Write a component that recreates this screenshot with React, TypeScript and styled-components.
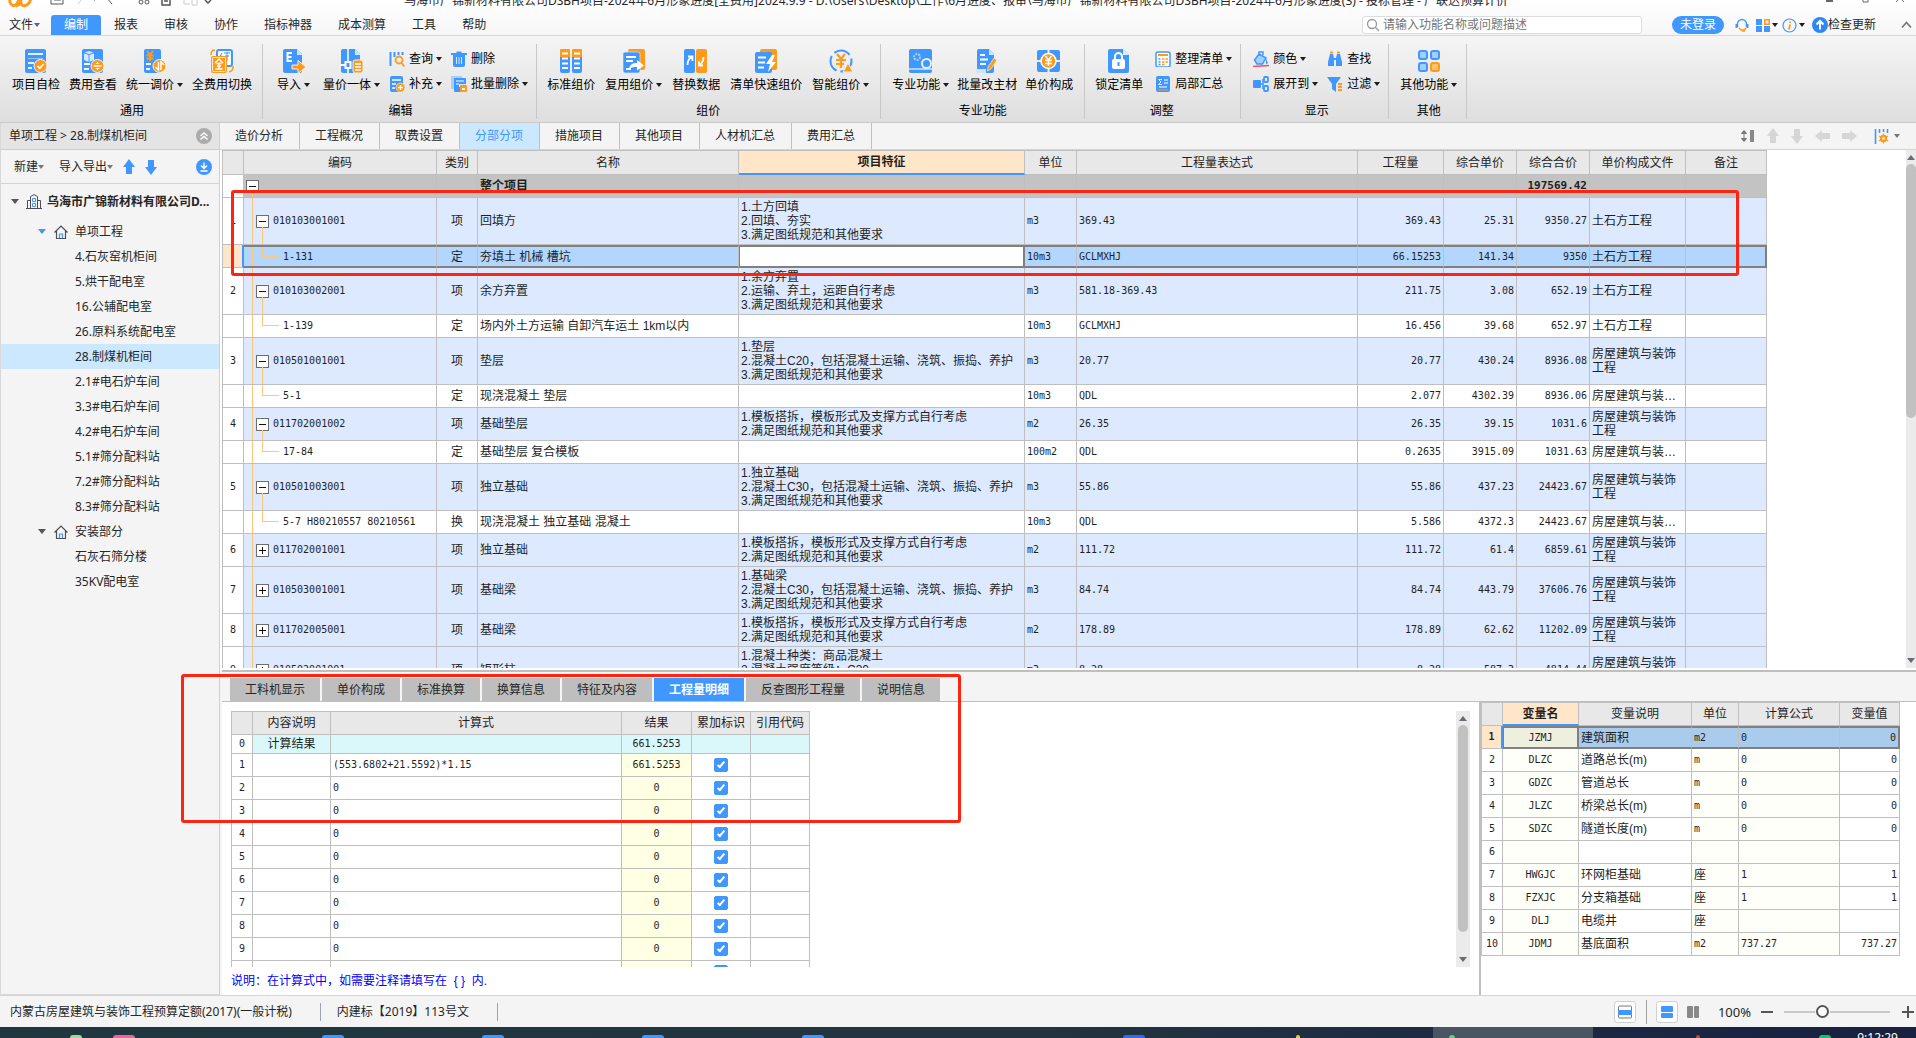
import React from 'react';
import styled, { createGlobalStyle, css } from 'styled-components';

const blue = '#4098ff';
const orange = '#ff9a1a';
const line = '#bfbfbf';
const uiFont = '"Noto Sans", "Noto Sans CJK SC", sans-serif';
const gridFont = '"Liberation Sans", "Noto Sans CJK SC", sans-serif';
const monoFont = '"DejaVu Sans Mono", "Noto Sans CJK SC", monospace';

const Global = createGlobalStyle`
  *, *::before, *::after { box-sizing: border-box; }
  body { margin: 0; overflow: hidden; }
  button, input { font: inherit; color: inherit; }
  button { background: none; border: 0; padding: 0; cursor: pointer; }
  svg { display: block; flex: none; }
`;

const Shell = styled.div`
  height: 100vh;
  display: flex;
  flex-direction: column;
  font: 12px/16px ${uiFont};
  color: #262626;
  background: #f4f4f4;
`;

/* ---------- title and menu ---------- */

const TopBar = styled.header`
  flex: none;
  background: linear-gradient(#ffffff, #f6f6f6);
  border-bottom: 1px solid #d8d8d8;
`;

const TitleRow = styled.div`
  height: 15px;
  overflow: hidden;
  display: grid;
  grid-template-columns: 1fr auto 1fr;
  align-items: start;
  padding: 0 12px 0 8px;
  svg:last-child { justify-self: end; }
`;

const TitleText = styled.h1`
  margin: -7px 0 0;
  font: 12px/16px ${uiFont};
  white-space: nowrap;
`;

const MenuRow = styled.nav`
  height: 20px;
  display: flex;
  align-items: stretch;
`;

const MenuItem = styled.button<{ $active?: boolean; $file?: boolean }>`
  display: flex;
  align-items: center;
  gap: 1px;
  padding: ${p => (p.$file ? '0 11px 0 9px' : '0 13px')};
  border-radius: 3px 3px 0 0;
  ${p => p.$active && css`background: ${blue}; color: #fff;`}
`;

const MenuTools = styled.div`
  margin-left: auto;
  padding-right: 4px;
  display: flex;
  align-items: center;
`;

const SearchBox = styled.label`
  width: 280px;
  height: 18px;
  margin-right: 30px;
  padding: 0 3px;
  display: flex;
  align-items: center;
  gap: 3px;
  background: #fff;
  border: 1px solid #dcdcdc;
  border-radius: 3px;
  input { flex: 1; min-width: 0; border: 0; outline: 0; padding: 0; background: none; height: 16px; }
  input::placeholder { color: #757575; opacity: 1; }
`;

const LoginPill = styled.button`
  width: 52px;
  height: 18px;
  border-radius: 9px;
  background: ${blue};
  color: #fff;
  line-height: 16px;
`;

const ToolButton = styled.button<{ $gap: number }>`
  margin-left: ${p => p.$gap}px;
  display: flex;
  align-items: center;
  gap: 2px;
`;

const UpdateButton = styled(ToolButton)`
  gap: 0;
`;

const Caret = styled.i<{ $color?: string; $size?: number }>`
  flex: none;
  width: 0;
  height: 0;
  border: ${p => p.$size ?? 3}px solid transparent;
  border-bottom: 0;
  border-top: ${p => (p.$size ?? 3) + 1}px solid ${p => p.$color ?? '#1c1c1c'};
`;

/* ---------- ribbon ---------- */

const Ribbon = styled.div`
  flex: none;
  height: 87px;
  display: flex;
  padding: 8px 0 3px;
  background: linear-gradient(#f5f5f5, #dedede);
  border-bottom: 1px solid #c9c9c9;
  color: #000;
`;

const Group = styled.section<{ $l: number; $r: number }>`
  display: flex;
  flex-direction: column;
  padding: 0 ${p => p.$r}px 0 ${p => p.$l}px;
  border-right: 1px solid #c8c8c8;
  h2 { margin: 0; font: 12px/16px ${uiFont}; text-align: center; }
`;

const GroupBody = styled.div<{ $gap: number }>`
  height: 59px;
  padding-top: 5px;
  display: flex;
  gap: ${p => p.$gap}px;
`;

const BigButton = styled.button`
  display: flex;
  flex-direction: column;
  align-items: center;
  gap: 4px;
  padding: 0 4px;
  height: 44px;
  white-space: nowrap;
  span { display: flex; align-items: center; gap: 3px; height: 16px; }
`;

const SmallGrid = styled.div`
  display: grid;
  grid-auto-flow: column;
  grid-template-rows: 20px 20px;
  row-gap: 5px;
  column-gap: 9px;
`;

const SmallButton = styled.button`
  display: flex;
  align-items: center;
  gap: 4px;
  white-space: nowrap;
  span { display: flex; align-items: center; gap: 3px; }
`;

/* ---------- work area ---------- */

const Work = styled.div`
  flex: 1;
  min-height: 0;
  display: grid;
  grid-template-columns: 220px minmax(0, 1fr);
`;

const Side = styled.aside`
  border-right: 1px solid #d0d0d0;
  border-bottom: 1px solid #d8d8d8;
  border-left: 1px solid #d8d8d8;
`;

const Crumb = styled.div`
  height: 27px;
  padding: 0 7px 0 8px;
  display: flex;
  align-items: center;
  justify-content: space-between;
  background: #e4e4e4;
  border-bottom: 1px solid #cfcfcf;
`;

const SideTools = styled.div`
  height: 34px;
  padding: 0 7px 0 13px;
  display: flex;
  align-items: center;
  border-bottom: 1px solid #d4d4d4;
  button { display: flex; align-items: center; margin-right: 10px; }
  button:nth-child(2) { margin-left: 5px; }
  button:last-child { margin: 0 0 0 auto; }
`;

const Tree = styled.ul`
  list-style: none;
  margin: 0;
  padding: 0;
`;

const TreeRow = styled.button<{ $level: number; $active?: boolean }>`
  width: 100%;
  height: ${p => (p.$level === 0 ? 35 : 25)}px;
  display: flex;
  align-items: center;
  padding-left: ${p => [10, 37, 74][p.$level]}px;
  font-weight: ${p => (p.$level === 0 ? 700 : 400)};
  background: ${p => (p.$active ? '#cce8ff' : 'transparent')};
  white-space: nowrap;
  svg { margin: ${p => (p.$level === 0 ? '0 5px 0 7px' : '0 7px 0 8px')}; }
`;

const Main = styled.main`
  display: flex;
  flex-direction: column;
  min-width: 0;
  min-height: 0;
`;

const MainTabs = styled.div`
  flex: none;
  height: 27px;
  display: flex;
  border-bottom: 1px solid #d4d4d4;
`;

const MainTab = styled.button<{ $active?: boolean }>`
  padding: 0 16px 0 15px;
  border-right: 1px solid ${line};
  ${p => p.$active && css`background: #cce8ff; color: ${blue};`}
`;

const TabTools = styled.div`
  margin-left: auto;
  padding-right: 16px;
  display: flex;
  align-items: center;
  gap: 12px;
  button { display: flex; align-items: center; gap: 4px; }
  button:last-child { margin-left: 5px; }
`;

const Panes = styled.div`
  flex: 1;
  min-height: 0;
  display: grid;
  grid-template-rows: minmax(0, 520fr) minmax(0, 325fr);
`;

const UpperPane = styled.section`
  position: relative;
  min-height: 0;
  padding: 0 0 2px 2px;
  display: flex;
  justify-content: space-between;
  background: #fff;
`;

const Clip = styled.div`
  flex: 1;
  min-width: 0;
  min-height: 0;
  overflow: hidden;
`;

const Mark = styled.div<{ $x: number; $y: number; $w: number; $h: number }>`
  position: absolute;
  left: ${p => p.$x}px;
  top: ${p => p.$y}px;
  width: ${p => p.$w}px;
  height: ${p => p.$h}px;
  border: 3px solid #fe2412;
  border-radius: 3px;
  pointer-events: none;
  z-index: 3;
`;

const Bar = styled.div<{ $w: number; $thumb: number }>`
  flex: none;
  width: ${p => p.$w}px;
  padding: 5px 0;
  display: flex;
  flex-direction: column;
  align-items: center;
  background: #ebebeb;
  &::before, &::after { content: ''; border: 4px solid transparent; }
  &::before { border-top: 0; border-bottom: 5px solid #6b6b75; margin-bottom: 4px; }
  &::after { border-bottom: 0; border-top: 5px solid #6b6b75; margin-top: auto; }
  div { width: 10px; height: ${p => p.$thumb}%; border-radius: 5px; background: #c1c1c1; }
`;

/* ---------- grids ---------- */

const Grid = styled.table`
  table-layout: fixed;
  border-collapse: separate;
  border-spacing: 0;
  border-top: 1px solid ${line};
  font: 12px/14px ${gridFont};
  color: #1f1f1f;
`;

const Head = styled.th<{ $on?: boolean; $h: number }>`
  height: ${p => p.$h}px;
  padding: 0;
  font-weight: ${p => (p.$on ? 700 : 400)};
  background: ${p => (p.$on ? '#ffe6c8' : '#e8e8e8')};
  border-right: 1px solid ${line};
  border-bottom: ${p => (p.$on ? `2px solid ${blue}` : `1px solid ${line}`)};
  &:first-child { border-left: 1px solid ${line}; }
`;

type CellProps = { $bg?: string; $align?: string; $mono?: boolean; $clip?: boolean; $picked?: boolean; $bold?: boolean; $focus?: boolean };

const Cell = styled.td<CellProps>`
  padding: 0 2px;
  overflow: hidden;
  background: ${p => p.$bg ?? '#fff'};
  text-align: ${p => p.$align ?? 'left'};
  border-right: 1px solid ${line};
  border-bottom: 1px solid ${line};
  font-weight: ${p => (p.$bold ? 700 : 400)};
  ${p => p.$mono && css`font-family: ${monoFont}; font-size: ${p.$bold ? 11 : 10}px;`}
  ${p => p.$clip && css`white-space: nowrap; text-overflow: ellipsis;`}
  ${p => p.$picked && css`
    border-top: 2px solid #808080;
    border-bottom: 2px solid #808080;
    &:last-child { border-right: 2px solid #808080; }
  `}
  ${p => p.$focus && css`border-right: 2px solid #808080; border-left: 1px solid #808080;`}
`;

const NumCell = styled.td<{ $on?: boolean; $bold?: boolean }>`
  padding: 0;
  text-align: center;
  font: ${p => (p.$bold ? 700 : 400)} 10px/14px ${monoFont};
  background: ${p => (p.$on ? '#ffe6c8' : '#fff')};
  border-left: 1px solid ${line};
  border-bottom: 1px solid ${line};
  border-right: ${p => (p.$on ? `2px solid ${blue}` : `1px solid ${line}`)};
`;

const Row = styled.tr<{ $h: number }>`
  height: ${p => p.$h}px;
`;

const CodeCell = styled(Cell)<{ $kind: 'root' | 'open' | 'closed' | 'leaf' }>`
  position: relative;
  padding-left: ${p => ({ root: 2, open: 12, closed: 12, leaf: 39 })[p.$kind]}px;
  &::before {
    content: '';
    position: absolute;
    left: 8px;
    top: ${p => (p.$kind === 'root' ? '16px' : '0')};
    bottom: -1px;
    width: 4px;
    border-left: 1px solid #ffc57a;
  }
  ${p => p.$kind === 'open' && css`
    &::after {
      content: ''; position: absolute; left: 18px; top: calc(50% + 6px); bottom: -1px;
      border-left: 1px solid #ffc57a;
    }
  `}
  ${p => p.$kind === 'leaf' && css`
    &::after {
      content: ''; position: absolute; left: 18px; top: 0; height: 50%; width: 17px;
      border-left: 1px solid #ffc57a; border-bottom: 1px solid #ffc57a;
    }
  `}
`;

const CodeLine = styled.div`
  display: flex;
  align-items: center;
  gap: 4px;
`;

const Toggle = styled.button`
  position: relative;
  flex: none;
  width: 13px;
  height: 13px;
  border: 1px solid #6e6e6e;
  background: #fff;
  display: grid;
  place-items: center;
`;

const PickedInput = styled.input`
  display: block;
  width: 100%;
  height: 19px;
  border: 0;
  outline: 0;
  background: transparent;
`;

const Check = styled.input`
  appearance: none;
  display: block;
  position: relative;
  width: 14px;
  height: 14px;
  margin: 0 auto;
  border-radius: 2px;
  border: 1px solid #a0a0a0;
  &:checked { background: ${blue}; border-color: ${blue}; }
  &:checked::after {
    content: ''; position: absolute; left: 4px; top: 1px; width: 4px; height: 8px;
    border: solid #fff; border-width: 0 2px 2px 0; transform: rotate(40deg);
  }
`;

/* ---------- lower pane ---------- */

const LowerPane = styled.section`
  position: relative;
  min-height: 0;
  display: flex;
  flex-direction: column;
  margin-left: 2px;
  border-top: 2px solid ${line};
`;

const LowerTabs = styled.div`
  flex: none;
  height: 30px;
  padding: 6px 0 0 8px;
  display: flex;
  gap: 2px;
  border-bottom: 1px solid ${line};
`;

const LowerTab = styled.button<{ $active?: boolean }>`
  padding: 0 15px;
  background: ${p => (p.$active ? blue : '#bebebe')};
  color: ${p => (p.$active ? '#fff' : '#262626')};
  font-weight: ${p => (p.$active ? 700 : 400)};
`;

const LowerBody = styled.div`
  flex: 1;
  min-height: 0;
  display: grid;
  grid-template-columns: minmax(0, 1fr) 437px;
  background: #fff;
`;

const Formula = styled.div`
  min-height: 0;
  display: flex;
  flex-direction: column;
  padding: 9px 9px 0;
  p { margin: 0; font: 12px/28px ${gridFont}; color: #0000ff; white-space: pre; }
`;

const FormulaArea = styled.div`
  flex: 1;
  min-height: 0;
  display: flex;
`;

const Variables = styled.div`
  border-left: 2px solid ${line};
  overflow: hidden;
`;

/* ---------- status and task bars ---------- */

const Status = styled.footer`
  flex: none;
  height: 32px;
  display: flex;
  align-items: center;
  border-top: 1px solid #d4d4d4;
  background: #f4f4f4;
  span { padding: 0 28px 0 16px; border-right: 1px solid #9aa4b4; line-height: 18px; }
  span:first-child { padding-left: 10px; }
`;

const StatusTools = styled.div`
  margin-left: auto;
  padding-right: 2px;
  display: flex;
  align-items: center;
  button { display: grid; place-items: center; }
  output { font-size: 13px; margin: 0 10px 0 14px; }
`;

const ViewButton = styled.button<{ $framed?: boolean }>`
  width: 22px;
  height: 22px;
  border-radius: 3px;
  ${p => (p.$framed ? css`background: #fff; border: 1px solid #d0d0d0;` : css`margin-left: 4px;`)}
`;

const Split = styled.i`
  width: 1px;
  height: 24px;
  margin: 0 9px 0 10px;
  background: #a0a0a0;
`;

const Zoom = styled.input`
  appearance: none;
  width: 106px;
  height: 14px;
  margin: 0 12px 0 11px;
  background: linear-gradient(#c8c8c8, #c8c8c8) center / 100% 2px no-repeat;
  &::-webkit-slider-thumb {
    appearance: none; width: 13px; height: 13px; border-radius: 50%;
    background: #fff; border: 2px solid #555; box-shadow: 0 0 0 1px #f4f4f4;
  }
`;

const Task = styled.div`
  flex: none;
  height: 11px;
  overflow: hidden;
  display: flex;
  align-items: flex-end;
  background: linear-gradient(90deg, #20373f, #22343f 55%, #1d2944 80%, #18213d);
  color: #fff;
  time { margin: 5px 18px 0 auto; align-self: flex-start; line-height: 12px; }
`;

const TaskIcon = styled.i<{ $gap: number; $w: number; $c: string }>`
  flex: none;
  margin-left: ${p => p.$gap}px;
  width: ${p => p.$w}px;
  height: 3px;
  border-radius: 3px 3px 0 0;
  background: ${p => p.$c};
`;

const TaskActive = styled.div`
  flex: none;
  margin-left: 133px;
  width: 160px;
  height: 11px;
  display: flex;
  align-items: flex-end;
  background: #4a5563;
`;

/* ---------- icons ---------- */

const Svg = ({ w = 24, h = 24, box, children }: { w?: number; h?: number; box?: string; children: React.ReactNode }) => (
  <svg width={w} height={h} viewBox={box ?? `0 0 ${w} ${h}`} fill="none" aria-hidden="true">{children}</svg>
);

const Doc = ({ lines = true }: { lines?: boolean }) => (
  <>
    <rect x="1" y="0" width="21" height="24" rx="2" fill={blue} />
    {lines && <path d="M4 5h15M4 14h6M4 19h4" stroke="#e4f1ff" strokeWidth="2" />}
  </>
);
const Ring = ({ children }: { children?: React.ReactNode }) => (
  <><circle cx="16.500" cy="17" r="6.500" fill={orange} stroke="#f4f4f4" />{children}</>
);

const big: Record<string, React.ReactNode> = {
  check: <><Doc /><path d="M4 9.500h15" stroke="#8cc2ff" /><Ring><path d="m13.500 17 2.200 2.300 4-4.300" stroke="#fff" strokeWidth="1.800" /></Ring></>,
  cost: <><Doc lines={false} /><path d="M3 4l5-2 5 2v7l-5 2-5-2z" fill="#d7eaff" /><path d="M3 4l5 1.500L13 4M8 5.500V13" stroke={blue} /><path d="M3 15h6M3 20h5" stroke="#fff" strokeWidth="2" /><Ring><path d="M12.500 17h8" stroke="#fff" strokeWidth="1.500" /><path d="m14.500 15 2-2 2 2zm0 4 2 2 2-2z" fill="#fff" /></Ring></>,
  adjust: <><rect x="1" width="17" height="24" rx="2" fill={blue} /><path d="m4 2 3 4 3-4M3.500 6.500h7M3.500 9.500h7M7 6v6" stroke={orange} strokeWidth="2" /><path d="M3 15h5M3 20h4" stroke="#fff" strokeWidth="2" /><Ring><path d="M15.500 13v8l-3-3M18 21v-8l3 3" stroke="#fff" strokeWidth="1.500" /></Ring></>,
  swap: <><rect x="7" y="1" width="15" height="16" rx="2" fill="#fff" stroke={blue} strokeWidth="2" /><path d="m12 4-2 3h2m2-3h6m-5 3h4m-2-4v9" stroke={blue} /><path d="M1 6c0-4 2-5 4-5M23 17c0 4-1 5-4 6" stroke={orange} strokeWidth="1.500" /><rect x="1" y="7" width="16" height="17" rx="2" fill={orange} /><rect x="2.500" y="8.500" width="13" height="14" rx="1" stroke="#fff" strokeWidth=".8" /><path d="m5 14 4-4 4 4M6.500 14.500h5M7 17h4M5.500 20h7M9 14v6" stroke="#fff" strokeWidth="1.300" /></>,
  import: <><path d="M3 0h12l5 5v17a2 2 0 0 1-2 2H3a2 2 0 0 1-2-2V2a2 2 0 0 1 2-2z" fill={blue} /><path d="M15 0l6 6h-6z" fill="#cfe5ff" /><path d="M10 4H5.500v8H10M5.500 8H9.500" stroke="#fff" strokeWidth="2" /><path d="M10 16h6v-4.500l8 6.500-8 6.500V20h-6z" fill={orange} stroke="#eee" /></>,
  zip: <><path d="M3 0h12l5 5v17a2 2 0 0 1-2 2H3a2 2 0 0 1-2-2V2a2 2 0 0 1 2-2z" fill={blue} /><path d="M15 0l6 6h-6z" fill="#cfe5ff" /><path d="M8 0v13M8 19v5" stroke="#fff" strokeWidth="1.500" /><path d="M5.500 13h5v6h-5zM0 16h5" stroke="#fff" strokeWidth="2" /><rect x="13" y="11" width="10" height="13" rx="2" fill={orange} stroke="#eee" /><path d="M15 15h6M15 18h6M15 21h6" stroke="#fff" strokeWidth="1.300" /></>,
  standard: <>{[1, 13].map(x => <g key={x}><rect x={x} width="10" height="24" rx="2" fill={blue} /><path d={`M${x} 8V2a2 2 0 0 1 2-2h6a2 2 0 0 1 2 2v6z`} fill={orange} /><path d={`M${x + 2} 4.500h6M${x + 2} 9.500h6M${x + 2} 14.500h6M${x + 2} 19h6`} stroke="#fff" strokeWidth="2" /></g>)}</>,
  reuse: <><rect x="6" y="0" width="17" height="21" rx="2" fill={orange} /><rect x="1" y="3" width="17" height="21" rx="2" fill={blue} stroke="#eee" strokeWidth=".6" /><path d="M4 8h10M4 12h7M4 20h5" stroke="#fff" strokeWidth="1.800" /><path d="M7 20c1-5 4-6 8-6v-3l7 5.500-7 5V18c-3 0-5 0-8 2z" fill="#fff" /></>,
  replace: <><rect x="0" width="11" height="24" rx="2" fill={blue} /><rect x="12" width="11" height="24" rx="2" fill={orange} /><path d="M3.500 16c0-4 1-6 4-8M4 7.500h4.500V12M19.500 8c0 4-1 6-4 8M19 16.500h-4V12" stroke="#fff" strokeWidth="1.800" /></>,
  quick: <><rect x="6" y="0" width="17" height="21" rx="2" fill={orange} /><rect x="1" y="3" width="17" height="21" rx="2" fill={blue} /><path d="M4 8.500h8M4 13.500h7M4 18.500h6" stroke="#fff" strokeWidth="2" /><path d="m18 6-6 9h4l-2 8 8-10h-4l3-7z" fill="#fff" /></>,
  smart: <><circle cx="12" cy="12" r="10.500" stroke={blue} strokeWidth="2" strokeDasharray="17 4" /><path d="m8 5 4 5 4-5M7 11h10M7 15h8M12 10v9" stroke={orange} strokeWidth="2.200" /><path d="m19 14 5 9H14z" fill={orange} stroke="#eee" /></>,
  pro: <><rect x="0" width="23" height="24" rx="2" fill={blue} /><path d="M0 20h23" stroke="#cfe5ff" strokeWidth="1.500" /><circle cx="8" cy="8" r="3" stroke="#a6d0ff" strokeWidth="2" strokeDasharray="2 1" /><circle cx="17.500" cy="14.500" r="4.500" fill={blue} stroke="#e4f1ff" strokeWidth="2" /></>,
  batch: <><path d="M4 0h10l5 5v17a2 2 0 0 1-2 2H2V2a2 2 0 0 1 2-2z" fill={blue} /><path d="M14 0l6 6h-6z" fill="#cfe5ff" /><path d="M1 20h10v4H3a2 2 0 0 1-2-2z" fill="#cfe5ff" /><path d="M5 6h5M5 10.500h8M5 15h6" stroke="#fff" strokeWidth="1.800" /><path d="m13 18 6-9 3 2-6 9-3.500 2z" fill={orange} stroke="#eee" strokeWidth=".7" /></>,
  compose: <><rect x="0" y="1" width="23" height="22" rx="2" fill={blue} /><path d="M11.500 0v24M0 12h23" stroke="#ececec" strokeWidth="2" /><circle cx="11.500" cy="12" r="7.500" fill={orange} stroke="#fff" strokeWidth="1.500" /><path d="m8.500 7 3 4 3-4M8 11.500h7M8 14.500h7M11.500 11v6" stroke="#fff" strokeWidth="1.500" /></>,
  lock: <><path d="M3 0h13l6 6v16a2 2 0 0 1-2 2H3a2 2 0 0 1-2-2V2a2 2 0 0 1 2-2z" fill={blue} /><path d="M16 0l6 6h-6z" fill="#dcedff" /><rect x="5" y="10" width="13" height="10" rx="2" fill="#fff" /><path d="M8 10V7.500a3.500 3.500 0 0 1 7 0V10" stroke="#fff" strokeWidth="2" /><path d="M11.500 13v4" stroke={blue} strokeWidth="2" /></>,
  other: <>{[[2, 2, blue, '#a3cfff'], [14, 2, blue, '#a3cfff'], [2, 14, blue, '#a3cfff'], [14, 14, orange, '#ffc46b']].map(([x, y, s, f]) => <rect key={`${x}${y}`} x={x} y={y} width="8" height="8" rx="2" fill={f as string} stroke={s as string} strokeWidth="2" />)}</>,
};

const small: Record<string, React.ReactNode> = {
  query: <><path d="M1.500 1v14M5.500 1v5M9.500 1v3M13.500 1v3" stroke={blue} strokeWidth="2" /><circle cx="10" cy="9" r="3.500" stroke={orange} strokeWidth="1.800" /><path d="m12.500 12 3 3.500" stroke={orange} strokeWidth="1.800" /></>,
  add: <><rect x="1" y="0" width="13" height="16" rx="2" fill={blue} /><path d="M3 4h9M3 8h4M3 12h3" stroke="#fff" strokeWidth="1.500" /><circle cx="11.500" cy="11.500" r="4.500" fill={orange} stroke="#eee" strokeWidth=".6" /><path d="M9 11.500h5M11.500 9v5" stroke="#fff" strokeWidth="1.300" /></>,
  trash: <><path d="M0 3h16M5.500 1.500h5" stroke={blue} strokeWidth="2" /><path d="M2 4h12v10a2 2 0 0 1-2 2H4a2 2 0 0 1-2-2z" fill={blue} /><path d="M5.500 6v7M8 6v7M10.500 6v7" stroke="#cfe5ff" /></>,
  batchDel: <><rect x="0" y="0" width="11" height="13" rx="1" fill="#a3cfff" /><rect x="3" y="2" width="12" height="14" rx="1" fill={blue} /><path d="M5 5h8M5 8h3" stroke="#fff" /><path d="M8 9.500h8" stroke="#fff" strokeWidth="2.500" /><rect x="9" y="9" width="7" height="7" rx="1" fill={orange} /><path d="M11 12h3v2h-3z" fill="#fff" /></>,
  arrange: <><rect x="1" y="1" width="14" height="15" rx="2" fill="#fff" stroke={blue} strokeWidth="1.500" /><path d="M3 4h10" stroke={orange} strokeWidth="2" /><path d="M3.500 8h2M3.500 11h2M3.500 13.500h2" stroke={blue} strokeWidth="1.500" /><path d="M7 8h2.500M10.500 8H13M7 11h2.500M10.500 11H13M7 13.500h2.500" stroke={orange} strokeWidth="1.500" /></>,
  partial: <><rect x="1" y="0" width="14" height="16" rx="2" fill={blue} /><path d="M7 3.500H3.500L6 6 3.500 8.500H7" stroke="#d7eaff" /><path d="M9 4h4M9 7h4M4 11h8" stroke="#fff" strokeWidth="1.200" /><path d="M3 14h10" stroke={orange} /></>,
  color: <><path d="m6 3 7 4-3.500 6H4L1.500 9z" fill="#a3cfff" stroke={blue} strokeWidth="1.500" /><path d="M6 5V1h4v3" stroke={blue} strokeWidth="1.500" /><path d="M13 8c2 3 2.500 5 0 5z" fill={blue} /><path d="M0 15.500l16-1" stroke="#ff4d4f" strokeWidth="1.500" /></>,
  expand: <><rect x="0" y="4" width="8" height="8" rx="1" fill={blue} /><path d="M8 8h2M10 3v10" stroke={blue} strokeWidth="1.500" /><rect x="11" y="1" width="4" height="5" rx="1" stroke={blue} strokeWidth="1.800" /><rect x="11" y="10" width="4" height="5" rx="1" stroke={blue} strokeWidth="1.800" /></>,
  find: <><path d="M3 3h3l1 4v8H1V11zM13 3h-3L9 7v8h6V11z" fill={blue} /><path d="M3 1.500h3M10 1.500h3" stroke={orange} strokeWidth="2" /><path d="M7 8h2" stroke={blue} strokeWidth="2" /></>,
  filter: <><path d="M0 1h14L9 8v8l-4-3V8z" fill={blue} /><path d="M11 8h4M11 11h4M11 14h4" stroke={orange} strokeWidth="1.800" /></>,
};

const House = () => (
  <Svg w={14} h={14}><path d="M.5 7.500 7 1l6.500 6.500M2.500 6v7.500h9V6" stroke="#4a4f58" strokeWidth="1.200" /><path d="M5.500 13V9h3v4" stroke={blue} strokeWidth="1.200" /></Svg>
);

const Arrow = ({ turn, color }: { turn: number; color: string }) => (
  <Svg w={12} h={16}><path transform={`rotate(${turn} 6 8)`} d="M6 0l6 8H9v7H3V8H0z" fill={color} /></Svg>
);

/* ---------- data ---------- */

type Btn = [string, string, boolean?];
type RibbonGroup = { title: string; l: number; r: number; gap: number; big: Btn[]; small?: Btn[] };

const ribbon: RibbonGroup[] = [
  { title: '通用', l: 8, r: 6, gap: 1, big: [['check', '项目自检'], ['cost', '费用查看'], ['adjust', '统一调价', true], ['swap', '全费用切换']] },
  { title: '编辑', l: 10, r: 8, gap: 5, big: [['import', '导入', true], ['zip', '量价一体', true]], small: [['query', '查询', true], ['add', '补充', true], ['trash', '删除'], ['batchDel', '批量删除', true]] },
  { title: '组价', l: 6, r: 7, gap: 2, big: [['standard', '标准组价'], ['reuse', '复用组价', true], ['replace', '替换数据'], ['quick', '清单快速组价'], ['smart', '智能组价', true]] },
  { title: '专业功能', l: 7, r: 7, gap: 0, big: [['pro', '专业功能', true], ['batch', '批量改主材'], ['compose', '单价构成']] },
  { title: '调整', l: 6, r: 8, gap: 8, big: [['lock', '锁定清单']], small: [['arrange', '整理清单', true], ['partial', '局部汇总']] },
  { title: '显示', l: 12, r: 8, gap: 0, big: [], small: [['color', '颜色', true], ['expand', '展开到', true], ['find', '查找'], ['filter', '过滤', true]] },
  { title: '其他', l: 7, r: 5, gap: 0, big: [['other', '其他功能', true]] },
];

const house = '房屋建筑与装饰工程';
const earth = '土石方工程';
const rule = '满足图纸规范和其他要求';
const form = ['1.模板搭拆，模板形式及支撑方式自行考虑', `2.${rule}`];
const pour = (name: string, grade: string) => [`1.${name}`, `2.混凝土${grade}，包括混凝土运输、浇筑、振捣、养护`, `3.${rule}`];

type Item = { no?: string; kind: 'open' | 'closed' | 'leaf'; code: string; type: string; name: string; feat?: string[]; rest: string[]; picked?: boolean };

const items: Item[] = [
  { no: '1', kind: 'open', code: '010103001001', type: '项', name: '回填方', feat: ['1.土方回填', '2.回填、夯实', `3.${rule}`], rest: ['m3', '369.43', '369.43', '25.31', '9350.27', earth] },
  { kind: 'leaf', code: '1-131', type: '定', name: '夯填土 机械 槽坑', rest: ['10m3', 'GCLMXHJ', '66.15253', '141.34', '9350', earth], picked: true },
  { no: '2', kind: 'open', code: '010103002001', type: '项', name: '余方弃置', feat: ['1.余方弃置', '2.运输、弃土，运距自行考虑', `3.${rule}`], rest: ['m3', '581.18-369.43', '211.75', '3.08', '652.19', earth] },
  { kind: 'leaf', code: '1-139', type: '定', name: '场内外土方运输 自卸汽车运土 1km以内', rest: ['10m3', 'GCLMXHJ', '16.456', '39.68', '652.97', earth] },
  { no: '3', kind: 'open', code: '010501001001', type: '项', name: '垫层', feat: pour('垫层', 'C20'), rest: ['m3', '20.77', '20.77', '430.24', '8936.08', house] },
  { kind: 'leaf', code: '5-1', type: '定', name: '现浇混凝土 垫层', rest: ['10m3', 'QDL', '2.077', '4302.39', '8936.06', house] },
  { no: '4', kind: 'open', code: '011702001002', type: '项', name: '基础垫层', feat: form, rest: ['m2', '26.35', '26.35', '39.15', '1031.6', house] },
  { kind: 'leaf', code: '17-84', type: '定', name: '基础垫层 复合模板', rest: ['100m2', 'QDL', '0.2635', '3915.09', '1031.63', house] },
  { no: '5', kind: 'open', code: '010501003001', type: '项', name: '独立基础', feat: pour('独立基础', 'C30'), rest: ['m3', '55.86', '55.86', '437.23', '24423.67', house] },
  { kind: 'leaf', code: '5-7 H80210557 80210561', type: '换', name: '现浇混凝土 独立基础 混凝土', rest: ['10m3', 'QDL', '5.586', '4372.3', '24423.67', house] },
  { no: '6', kind: 'closed', code: '011702001001', type: '项', name: '独立基础', feat: form, rest: ['m2', '111.72', '111.72', '61.4', '6859.61', house] },
  { no: '7', kind: 'closed', code: '010503001001', type: '项', name: '基础梁', feat: pour('基础梁', 'C30'), rest: ['m3', '84.74', '84.74', '443.79', '37606.76', house] },
  { no: '8', kind: 'closed', code: '011702005001', type: '项', name: '基础梁', feat: form, rest: ['m2', '178.89', '178.89', '62.62', '11202.09', house] },
  { no: '9', kind: 'closed', code: '010502001001', type: '项', name: '矩形柱', feat: ['1.混凝土种类：商品混凝土', '2.混凝土强度等级：C30', `3.${rule}`], rest: ['m3', '8.28', '8.28', '587.3', '4814.44', house] },
];

const mainCols: [string, number][] = [['', 22], ['编码', 193], ['类别', 41], ['名称', 261], ['项目特征', 286], ['单位', 52], ['工程量表达式', 281], ['工程量', 86], ['综合单价', 73], ['综合合价', 73], ['单价构成文件', 96], ['备注', 81]];
const calcCols: [string, number][] = [['', 22], ['内容说明', 78], ['计算式', 291], ['结果', 70], ['累加标识', 59], ['引用代码', 59]];
const varCols: [string, number][] = [['', 22], ['变量名', 76], ['变量说明', 113], ['单位', 47], ['计算公式', 101], ['变量值', 60]];

const vars = [
  ['JZMJ', '建筑面积', 'm2', '0', '0'], ['DLZC', '道路总长(m)', 'm', '0', '0'], ['GDZC', '管道总长', 'm', '0', '0'],
  ['JLZC', '桥梁总长(m)', 'm', '0', '0'], ['SDZC', '隧道长度(m)', 'm', '0', '0'], ['', '', '', '', ''],
  ['HWGJC', '环网柜基础', '座', '1', '1'], ['FZXJC', '分支箱基础', '座', '1', '1'], ['DLJ', '电缆井', '座', '', ''],
  ['JDMJ', '基底面积', 'm2', '737.27', '737.27'],
];

const leaves = ['4.石灰窑机柜间', '5.烘干配电室', '16.公辅配电室', '26.原料系统配电室', '28.制煤机柜间', '2.1#电石炉车间', '3.3#电石炉车间', '4.2#电石炉车间', '5.1#筛分配料站', '7.2#筛分配料站', '8.3#筛分配料站'];

const isLatin = (s: string) => /^[\x20-\x7e]*$/.test(s);
const sum = (cols: [string, number][]) => cols.reduce((t, c) => t + c[1], 0);

/* ---------- parts ---------- */

const Cols = ({ cols, h, on }: { cols: [string, number][]; h: number; on?: string }) => (
  <>
    <colgroup>{cols.map(([n, w]) => <col key={n} style={{ width: w }} />)}</colgroup>
    <thead><tr>{cols.map(([n]) => <Head key={n} $h={h} $on={!!on && n === on}>{n}</Head>)}</tr></thead>
  </>
);

const Expander = ({ open }: { open: boolean }) => (
  <Toggle aria-label={open ? '折叠' : '展开'}>
    <Svg w={9} h={9}><path d={open ? 'M1 4.500h7' : 'M1 4.500h7M4.500 1v7'} stroke="#111" /></Svg>
  </Toggle>
);

const MainGrid = () => (
  <Grid style={{ width: sum(mainCols) }}>
    <Cols cols={mainCols} h={24} on="项目特征" />
    <tbody>
      <Row $h={23}>
        <NumCell />
        <CodeCell $kind="root" $bg="#c3c3c3"><Expander open /></CodeCell>
        <Cell $bg="#c3c3c3" />
        <Cell $bg="#c3c3c3" $bold>整个项目</Cell>
        {[0, 1, 2, 3, 4].map(i => <Cell key={i} $bg="#c3c3c3" />)}
        <Cell $bg="#c3c3c3" $bold $mono $align="right">197569.42</Cell>
        <Cell $bg="#c3c3c3" /><Cell $bg="#c3c3c3" />
      </Row>
      {items.map(it => {
        const bg = it.picked ? '#b3d6ff' : it.kind === 'leaf' ? '#fff' : '#dce9fe';
        const h = it.feat ? (it.feat.length === 3 ? 47 : 33) : 23;
        return (
          <Row key={it.code} $h={h}>
            <NumCell $on={it.picked}>{it.no}</NumCell>
            <CodeCell $kind={it.kind} $bg={bg} $mono $picked={it.picked} $clip>
              <CodeLine>{it.kind !== 'leaf' && <Expander open={it.kind === 'open'} />}{it.code}</CodeLine>
            </CodeCell>
            <Cell $bg={bg} $align="center" $picked={it.picked}>{it.type}</Cell>
            <Cell $bg={bg} $clip $picked={it.picked}>{it.name}</Cell>
            <Cell $bg={it.picked ? '#fff' : bg} $clip $picked={it.picked} $focus={it.picked}>
              {it.picked ? <PickedInput aria-label="项目特征" /> : it.feat?.map(f => <div key={f}>{f}</div>)}
            </Cell>
            {it.rest.map((v, i) => (
              <Cell key={i} $bg={bg} $picked={it.picked} $mono={isLatin(v)} $align={i > 1 && i < 5 ? 'right' : 'left'} $clip={i === 5 && it.kind === 'leaf'}>{v}</Cell>
            ))}
            <Cell $bg={bg} $picked={it.picked} />
          </Row>
        );
      })}
    </tbody>
  </Grid>
);

const CalcGrid = () => (
  <Grid style={{ width: sum(calcCols) }}>
    <Cols cols={calcCols} h={23} />
    <tbody>
      <Row $h={19}>
        <NumCell>0</NumCell>
        <Cell $bg="#daf8f9" $align="center">计算结果</Cell>
        <Cell $bg="#daf8f9" />
        <Cell $bg="#daf8f9" $mono $align="center">661.5253</Cell>
        <Cell $bg="#daf8f9" /><Cell $bg="#daf8f9" />
      </Row>
      {Array.from({ length: 10 }, (_, i) => i + 1).map(n => (
        <Row key={n} $h={23}>
          <NumCell>{n}</NumCell>
          <Cell />
          <Cell $mono>{n === 1 ? '(553.6802+21.5592)*1.15' : '0'}</Cell>
          <Cell $bg="#ffffe4" $mono $align="center">{n === 1 ? '661.5253' : '0'}</Cell>
          <Cell><Check type="checkbox" defaultChecked aria-label={`累加标识 ${n}`} /></Cell>
          <Cell />
        </Row>
      ))}
    </tbody>
  </Grid>
);

const VarGrid = () => (
  <Grid style={{ width: sum(varCols) }}>
    <Cols cols={varCols} h={23} on="变量名" />
    <tbody>
      {vars.map((v, r) => (
        <Row key={r} $h={23}>
          <NumCell $on={r === 0} $bold={r === 0}>{r + 1}</NumCell>
          {v.map((t, i) => (
            <Cell
              key={i}
              $picked={r === 0}
              $focus={r === 0 && i === 0}
              $mono={isLatin(t)}
              $align={i === 0 ? 'center' : i === 4 ? 'right' : 'left'}
              $bg={r === 0 ? (i === 0 ? '#efefdf' : '#aaccec') : i === 1 || i === 4 ? '#fff' : '#fffffa'}
            >{t}</Cell>
          ))}
        </Row>
      ))}
    </tbody>
  </Grid>
);

export default function App() {
  return (
    <Shell>
      <Global />
      <TopBar>
        <TitleRow>
          <Svg w={210} h={8}>
            <path d="M2 -4c-2 10 6 14 9 3M8 6c5-1 5-6 6-11M16 6c5-1 7-6 7-11M13 0c-1 5 2 7 6 5" stroke={orange} strokeWidth="3" />
            <path d="M43 -2v6h12v-6M46 0h7M104 4l-6-7M86 0h1" stroke="#555" />
            <path d="M70 4l6-7M176 -2v6h6M184 -2h5v7h-5z" stroke="#ccc" />
            <circle cx="133" cy="2" r="2" stroke="#555" /><circle cx="139" cy="2" r="2" stroke="#555" />
            <path d="M124 5V2h7V-3M127 2v3" stroke="#fff" strokeWidth="0" />
            <path d="M154 -3v8h8v-8M156 1h4M197 0l3 3 3-3" stroke="#555" strokeWidth="1.500" />
          </Svg>
          <TitleText>乌海市广锦新材料有限公司DSBH项目-2024年6月形象进度[全费用]2024.9.9 - D:\Users\Desktop\工作\6月进度、报审\乌海市广锦新材料有限公司DSBH项目-2024年6月形象进度(3) - 投标管理 - 广联达预算计价</TitleText>
          <Svg w={90} h={8}><path d="M12 1h7" stroke="#666" strokeWidth="2" /><path d="M49 -3v5h5v-5M82 2l8-8M90 2l-8-8" stroke="#666" /></Svg>
        </TitleRow>
        <MenuRow>
          <MenuItem $file>文件<Caret $color="#666" /></MenuItem>
          {['编制', '报表', '审核', '协作', '指标神器', '成本测算', '工具', '帮助'].map((m, i) => <MenuItem key={m} $active={i === 0}>{m}</MenuItem>)}
          <MenuTools>
            <SearchBox>
              <Svg w={14} h={14}><circle cx="6" cy="6" r="4.500" stroke="#999" strokeWidth="1.300" /><path d="m9.500 9.500 3.500 3.500" stroke="#999" strokeWidth="1.300" /></Svg>
              <input aria-label="搜索" placeholder="请输入功能名称或问题描述" />
            </SearchBox>
            <LoginPill>未登录</LoginPill>
            <ToolButton $gap={11} aria-label="客服"><Svg w={14} h={14}><path d="M2.500 9V6a4.500 4.500 0 0 1 9 0v3" stroke={blue} strokeWidth="1.500" /><path d="M1.500 6v4M12.500 6v4" stroke={blue} strokeWidth="2" /><path d="M4 10c2 3 5 3 7 0M7 13h3" stroke={orange} strokeWidth="1.500" /></Svg></ToolButton>
            <ToolButton $gap={7} aria-label="应用"><Svg w={14} h={14}><path d="M0 1h6v6H0zM0 8h6v6H0zM8 8h6v6H8z" fill={blue} /><path d="M8.800 1.800h4.400v4.400H8.800z" stroke={orange} strokeWidth="1.600" /></Svg><Caret /></ToolButton>
            <ToolButton $gap={4} aria-label="信息"><Svg w={15} h={15}><circle cx="7.500" cy="7.500" r="6.500" stroke={blue} strokeWidth="1.200" /><path d="M8 3.500v1.500M8 6.500 7 11.500" stroke={orange} strokeWidth="1.800" /></Svg><Caret /></ToolButton>
            <UpdateButton $gap={7}><Svg w={16} h={16}><circle cx="8" cy="8" r="8" fill="#2f87f5" /><path d="M8 12.500v-8M4.500 7.500 8 4l3.500 3.500" stroke="#fff" strokeWidth="2" /></Svg>检查更新</UpdateButton>
            <ToolButton $gap={25} aria-label="收起功能区"><Svg w={11} h={8}><path d="m1 6.500 4.500-5 4.500 5" stroke="#777" strokeWidth="1.800" /></Svg></ToolButton>
          </MenuTools>
        </MenuRow>
      </TopBar>

      <Ribbon>
        {ribbon.map(g => (
          <Group key={g.title} $l={g.l} $r={g.r}>
            <GroupBody $gap={g.gap}>
              {g.big.map(([icon, label, drop]) => (
                <BigButton key={icon}><Svg>{big[icon]}</Svg><span>{label}{drop && <Caret />}</span></BigButton>
              ))}
              {g.small && (
                <SmallGrid>
                  {g.small.map(([icon, label, drop]) => (
                    <SmallButton key={icon}><Svg w={16} h={16}>{small[icon]}</Svg><span>{label}{drop && <Caret />}</span></SmallButton>
                  ))}
                </SmallGrid>
              )}
            </GroupBody>
            <h2>{g.title}</h2>
          </Group>
        ))}
      </Ribbon>

      <Work>
        <Side>
          <Crumb>
            单项工程 &gt; 28.制煤机柜间
            <button aria-label="收起"><Svg w={16} h={16}><circle cx="8" cy="8" r="8" fill="#acacac" /><path d="m4.500 8 3.500-3 3.500 3M4.500 11.500 8 8.500l3.500 3" stroke="#fff" strokeWidth="1.400" /></Svg></button>
          </Crumb>
          <SideTools>
            <button>新建<Caret $color="#777" /></button>
            <button>导入导出<Caret $color="#777" /></button>
            <button aria-label="上移"><Arrow turn={0} color={blue} /></button>
            <button aria-label="下移"><Arrow turn={180} color={blue} /></button>
            <button aria-label="下载"><Svg w={16} h={16}><circle cx="8" cy="8" r="8" fill={blue} /><path d="M8 3.500V9M5 6.500 8 9.500l3-3M4.500 12h7" stroke="#fff" strokeWidth="1.400" /></Svg></button>
          </SideTools>
          <Tree>
            <li><TreeRow $level={0}><Caret $size={4} $color="#555" /><Svg w={16} h={15}><path d="M0 14.500h16M4.500 14V2.500L8 .6l3.500 1.900V14M1.500 14V6.500h3M14.500 14V6.500h-3" stroke="#4a4f58" /><path d="M6.500 4.500h3v3h-3zM6.500 9.500h3v3h-3z" stroke={blue} /></Svg>乌海市广锦新材料有限公司D...</TreeRow></li>
            <li><TreeRow $level={1}><Caret $size={4} $color={blue} /><House />单项工程</TreeRow></li>
            {leaves.map((t, i) => <li key={t}><TreeRow $level={2} $active={i === 4}>{t}</TreeRow></li>)}
            <li><TreeRow $level={1}><Caret $size={4} $color="#555" /><House />安装部分</TreeRow></li>
            {['石灰石筛分楼', '35KV配电室'].map(t => <li key={t}><TreeRow $level={2}>{t}</TreeRow></li>)}
          </Tree>
        </Side>

        <Main>
          <MainTabs>
            {['造价分析', '工程概况', '取费设置', '分部分项', '措施项目', '其他项目', '人材机汇总', '费用汇总'].map((t, i) => <MainTab key={t} $active={i === 3}>{t}</MainTab>)}
            <TabTools>
              <button aria-label="行高"><Svg w={14} h={14}><path d="M3 3v8M0.500 4.500 3 1.500l2.500 3zM0.500 9.500 3 12.500l2.500-3z" fill="#777" stroke="#777" /><path d="M9 1h4v12H9z" fill="#888" /></Svg></button>
              <button aria-label="上移"><Arrow turn={0} color="#d6d6d6" /></button>
              <button aria-label="下移"><Arrow turn={180} color="#d6d6d6" /></button>
              <button aria-label="左移"><Svg w={15} h={12}><path d="M0 6 7 0v3h8v6H7v3z" fill="#d6d6d6" /></Svg></button>
              <button aria-label="右移"><Svg w={15} h={12}><path d="M15 6 8 0v3H0v6h8v3z" fill="#d6d6d6" /></Svg></button>
              <button aria-label="列设置"><Svg w={16} h={16}><path d="M1.500 1v15M5.500 1v4M9.500 1v3M13.500 1v4" stroke={blue} strokeWidth="1.600" /><circle cx="9.500" cy="10.500" r="2.500" stroke={orange} strokeWidth="2.400" /><path d="M9.500 5.500v10M5 8l9 5M14 8l-9 5" stroke={orange} strokeWidth="1.300" /><circle cx="9.500" cy="10.500" r="1.300" fill="#f4f4f4" /></Svg><Caret $color="#777" /></button>
            </TabTools>
          </MainTabs>
          <Panes>
            <UpperPane>
              <Clip><MainGrid /></Clip>
              <Bar $w={10} $thumb={50}><div /></Bar>
              <Mark $x={11} $y={40} $w={1508} $h={86} />
            </UpperPane>
            <LowerPane>
              <LowerTabs>
                {['工料机显示', '单价构成', '标准换算', '换算信息', '特征及内容', '工程量明细', '反查图形工程量', '说明信息'].map((t, i) => <LowerTab key={t} $active={i === 5}>{t}</LowerTab>)}
              </LowerTabs>
              <LowerBody>
                <Formula>
                  <FormulaArea>
                    <Clip><CalcGrid /></Clip>
                    <Bar $w={14} $thumb={84}><div /></Bar>
                  </FormulaArea>
                  <p>说明：在计算式中，如需要注释请填写在  {'{ }'}  内.</p>
                </Formula>
                <Variables><VarGrid /></Variables>
              </LowerBody>
              <Mark $x={-41} $y={2} $w={780} $h={149} />
            </LowerPane>
          </Panes>
        </Main>
      </Work>

      <Status>
        <span>内蒙古房屋建筑与装饰工程预算定额(2017)(一般计税)</span>
        <span>内建标【2019】113号文</span>
        <StatusTools>
          <ViewButton $framed aria-label="单窗口"><Svg w={14} h={14}><rect x=".5" y="1" width="13" height="12" rx="1" stroke="#777" /><path d="M0 5h14v5H0z" fill={blue} /></Svg></ViewButton>
          <Split />
          <ViewButton $framed aria-label="上下布局"><Svg w={12} h={12}><rect width="12" height="6" rx="1" fill={blue} /><rect y="7" width="12" height="5" rx="1" fill={blue} /></Svg></ViewButton>
          <ViewButton aria-label="左右布局"><Svg w={12} h={12}><rect width="6" height="12" rx="1" fill="#888" /><rect x="7" width="5" height="12" rx="1" fill="#888" /></Svg></ViewButton>
          <output>100%</output>
          <button aria-label="缩小"><Svg w={12} h={12}><path d="M0 6h12" stroke="#555" strokeWidth="2" /></Svg></button>
          <Zoom type="range" min={0} max={100} defaultValue={34} aria-label="缩放" />
          <button aria-label="放大"><Svg w={12} h={12}><path d="M0 6h12M6 0v12" stroke="#555" strokeWidth="2" /></Svg></button>
        </StatusTools>
      </Status>

      <Task>
        <TaskIcon $gap={70} $w={12} $c="#9ed89a" />
        <TaskIcon $gap={31} $w={22} $c="#f0649a" />
        <TaskIcon $gap={187} $w={22} $c={blue} />
        {[0, 1, 2].map(i => <TaskIcon key={i} $gap={138} $w={22} $c={blue} />)}
        <TaskIcon $gap={299} $w={22} $c="#2a6cf5" />
        <TaskIcon $gap={151} $w={4} $c="#e6d22a" />
        <TaskActive><TaskIcon $gap={16} $w={6} $c="#5fd07a" /></TaskActive>
        <TaskIcon $gap={103} $w={4} $c="#c8452e" />
        <TaskIcon $gap={119} $w={12} $c="#12c36b" />
        <time>9:12:29</time>
      </Task>
    </Shell>
  );
}
